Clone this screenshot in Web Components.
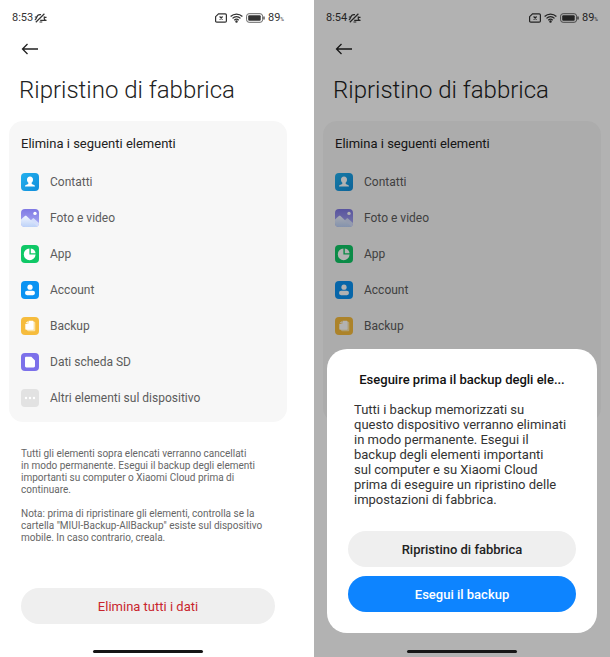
<!DOCTYPE html>
<html lang="it">
<head>
<meta charset="utf-8">
<meta name="viewport" content="width=device-width, initial-scale=1">
<title>Ripristino di fabbrica</title>
<style>
  body {
    margin: 0;
    background: #fff;
    font-family: Roboto, "Liberation Sans", sans-serif;
  }
  main {
    display: grid;
    grid-template-columns: 1fr 1fr;
    gap: 18px;
    min-height: 100vh;
  }
</style>
</head>
<body>
<main>
  <reset-screen time="8:53">
    <item-card heading="Elimina i seguenti elementi">
      <item-row icon="contacts">Contatti</item-row>
      <item-row icon="photos">Foto e video</item-row>
      <item-row icon="app">App</item-row>
      <item-row icon="account">Account</item-row>
      <item-row icon="backup">Backup</item-row>
      <item-row icon="sd">Dati scheda SD</item-row>
      <item-row icon="more">Altri elementi sul dispositivo</item-row>
    </item-card>
    <reset-notes></reset-notes>
    <pill-button slot="action" kind="danger">Elimina tutti i dati</pill-button>
  </reset-screen>
  <reset-screen time="8:54" dimmed>
    <item-card heading="Elimina i seguenti elementi" grow>
      <item-row icon="contacts">Contatti</item-row>
      <item-row icon="photos">Foto e video</item-row>
      <item-row icon="app">App</item-row>
      <item-row icon="account">Account</item-row>
      <item-row icon="backup">Backup</item-row>
    </item-card>
    <backup-dialog slot="dialog" heading="Eseguire prima il backup degli ele...">
      Tutti i backup memorizzati su<br>questo dispositivo verranno eliminati<br>in modo permanente. Esegui il<br>backup degli elementi importanti<br>sul computer e su Xiaomi Cloud<br>prima di eseguire un ripristino delle<br>impostazioni di fabbrica.
      <pill-button slot="actions" kind="strong">Ripristino di fabbrica</pill-button>
      <pill-button slot="actions" kind="primary">Esegui il backup</pill-button>
    </backup-dialog>
  </reset-screen>
</main>

<script>
const ICONS = {
  contacts: /*html*/`
    <defs><linearGradient id="g" x2="1" y2="1"><stop stop-color="#21b0ee"/><stop offset="1" stop-color="#128edb"/></linearGradient></defs>
    <rect width="18" height="18" rx="4" fill="url(#g)"/>
    <path fill="#fff" d="M9 3.600c1.900 0 3 1.300 3 3.100 0 1.300-.6 2.300-1.300 2.900v1.100c.3.700 3.300.8 3.300 2.700H4c0-1.900 3-2 3.300-2.700V9.600C6.600 9 6 8 6 6.700c0-1.800 1.100-3.100 3-3.100z"/>`,
  photos: /*html*/`
    <defs>
      <linearGradient id="g" x2="0" y2="1"><stop stop-color="#7f78e4"/><stop offset="1" stop-color="#aeb0f4"/></linearGradient>
      <linearGradient id="h" x2="0" y2="1"><stop stop-color="#f1f5ff"/><stop offset="1" stop-color="#bdd2f8"/></linearGradient>
      <clipPath id="c"><rect width="18" height="18" rx="4"/></clipPath>
    </defs>
    <g clip-path="url(#c)">
      <rect width="18" height="18" fill="url(#g)"/>
      <circle cx="14" cy="4.400" r="1.700" fill="#fff"/>
      <path fill="#d4defb" d="M8 13l3.500-3.300c.6-.5 1.200-.5 1.800 0L18 14v4H8z"/>
      <path fill="url(#h)" d="M0 10.500l3.600-3.200c.7-.6 1.500-.6 2.200 0L17 18H0z"/>
    </g>`,
  app: /*html*/`
    <rect width="18" height="18" rx="4" fill="#0fc866"/>
    <path fill="#fff" d="M8.400 3.400v6.200h6.200A5.900 5.900 0 1 1 8.400 3.400z"/>
    <path fill="#fff" d="M9.800 3.400a5.500 5.500 0 0 1 4.800 4.800H9.800z"/>`,
  account: /*html*/`
    <rect width="18" height="18" rx="4" fill="#0b93f2"/>
    <circle cx="9" cy="6.200" r="2.600" fill="#fff"/>
    <rect x="4" y="9.800" width="10" height="4.400" rx="2.100" fill="#fff"/>`,
  backup: /*html*/`
    <rect width="18" height="18" rx="4" fill="#f6bc3d"/>
    <path fill="#fbe2a4" d="M6 6l1-1.200h6c.8 0 1.300.5 1.300 1.300v6.800c0 .8-.5 1.300-1.300 1.300H7.200C6.400 14.200 6 13.700 6 13z"/>
    <path fill="#fff" d="M7.600 3.800h3.900c.7 0 1.100.4 1.100 1.100v6.800c0 .7-.4 1.100-1.100 1.100H5.400c-.7 0-1.100-.4-1.100-1.100V7.100h2.200c.7 0 1.100-.4 1.100-1.100z"/>
    <path fill="#fff" d="M4.500 6.200l2.200-2.200v1.600c0 .4-.2.600-.6.600z"/>`,
  sd: /*html*/`
    <rect width="18" height="18" rx="4" fill="#7c70ea"/>
    <path fill="#fff" d="M5.400 3.800h4.900L14 7.500v5.600c0 .9-.5 1.400-1.400 1.400H5.400c-.9 0-1.400-.5-1.400-1.400V5.200c0-.9.500-1.400 1.400-1.400z"/>`,
  more: /*html*/`
    <rect width="18" height="18" rx="4" fill="#e2e2e2"/>
    <g fill="#fff"><circle cx="5" cy="9" r="1.200"/><circle cx="9" cy="9" r="1.200"/><circle cx="13" cy="9" r="1.200"/></g>`
}

class StatusBar extends HTMLElement {

  constructor () {
    super()
    this.shadow = this.attachShadow({ mode: 'open' })
  }

  connectedCallback () {
    this.render()
  }

  render () {
    this.shadow.innerHTML =
    /*html*/`
    <style>
      :host {
        display: flex;
        justify-content: space-between;
        align-items: center;
        padding: 0 12px;
        height: 14px;
        font-size: 11px;
        line-height: 14px;
        color: #333;
      }
      div {
        display: flex;
        align-items: center;
        gap: 3px;
      }
      .clock {
        gap: 1px;
      }
      svg {
        display: block;
        fill: none;
        stroke: currentColor;
      }
      .percent {
        font-size: 5px;
        line-height: 5px;
        align-self: flex-end;
        padding-bottom: 3px;
      }
      .level {
        gap: 0;
      }
    </style>
    <div class="clock">
      <span>${this.getAttribute('time')}</span>
      <svg width="13" height="10" viewBox="0 0 13 10" stroke-width="1.200" aria-hidden="true">
        <path d="M.8 6.800c1.200-.3 1.500-1.200 1.900-2.500C3.300 2.200 4.900 1.300 7 1.700M10.300 3.400c-.4 1.800-.2 2.900.9 3.900H6.200M8.300 9H5.500M1.800 9.200L10.400.8M.8 4h1.500M10.200 4.300h2.300M11 7.300h1.500"/>
      </svg>
    </div>
    <div>
      <svg width="12" height="10" viewBox="0 0 12 10" stroke-width="1.200" aria-hidden="true">
        <path d="M3.500.8h6.700c.8 0 1.200.4 1.200 1.200v6c0 .8-.4 1.200-1.200 1.200H1.800C1 9.200.6 8.800.6 8V3.700zM4.600 3.500l3 3M7.600 3.500l-3 3"/>
      </svg>
      <svg width="13" height="10" viewBox="0 0 13 10" stroke-width="1.300" aria-hidden="true">
        <path d="M.6 3.500c3.300-3.200 8.500-3.200 11.800 0M2.500 5.400c2.300-2.200 5.700-2.200 8 0M4.300 7.200c1.300-1.200 3.100-1.200 4.400 0"/>
        <circle cx="6.500" cy="8.600" r=".6" fill="currentColor"/>
      </svg>
      <svg width="19" height="10" viewBox="0 0 19 10" aria-hidden="true">
        <rect x=".6" y=".7" width="16" height="8.600" rx="2.500" stroke="#666"/>
        <rect x="2.200" y="2.200" width="12.500" height="5.600" rx="1" fill="currentColor" stroke="none"/>
        <path d="M18 3.500v3" stroke-width="1.200"/>
      </svg>
      <div class="level"><span>89</span><span class="percent">%</span></div>
    </div>
    `
  }
}

class ResetScreen extends HTMLElement {

  constructor () {
    super()
    this.shadow = this.attachShadow({ mode: 'open' })
  }

  connectedCallback () {
    this.render()
  }

  render () {
    this.shadow.innerHTML =
    /*html*/`
    <style>
      :host {
        position: relative;
        display: flex;
        flex-direction: column;
        box-sizing: border-box;
        min-width: 0;
        padding: 11px 0 4px;
        background: #fff;
      }
      .back {
        align-self: flex-start;
        margin: 16px 0 0 21px;
        padding: 0;
        border: none;
        background: none;
        color: #222;
        cursor: pointer;
      }
      .back svg {
        display: block;
      }
      h1 {
        margin: 16px 19px 14px;
        font-size: 24px;
        line-height: 34px;
        font-weight: 300;
        color: #222;
      }
      .content {
        display: flex;
        flex-direction: column;
        flex: 1;
        padding: 0 9px;
      }
      :host([dimmed]) .content {
        padding-bottom: 202px;
      }
      .action {
        padding: 0 21px 26px;
      }
      .home {
        width: 110px;
        height: 3px;
        border-radius: 2px;
        background: #161616;
        align-self: center;
        z-index: 2;
      }
      .scrim {
        display: none;
        position: absolute;
        inset: 0;
        background: rgba(0, 0, 0, 0.3);
      }
      :host([dimmed]) .scrim {
        display: block;
      }
      ::slotted([slot="dialog"]) {
        position: absolute;
        left: 13px;
        right: 13px;
        bottom: 24px;
        z-index: 1;
      }
    </style>
    <status-bar time="${this.getAttribute('time')}"></status-bar>
    <button class="back" aria-label="Indietro">
      <svg width="18" height="16" viewBox="0 0 18 16" fill="none" stroke="currentColor" stroke-width="1.300"><path d="M17 8H1.500M6.500 3L1.500 8l5 5"/></svg>
    </button>
    <h1>Ripristino di fabbrica</h1>
    <div class="content"><slot></slot></div>
    <div class="action"><slot name="action"></slot></div>
    <div class="scrim"></div>
    <slot name="dialog"></slot>
    <div class="home"></div>
    `
  }
}

class ItemCard extends HTMLElement {

  constructor () {
    super()
    this.shadow = this.attachShadow({ mode: 'open' })
  }

  connectedCallback () {
    this.render()
  }

  render () {
    this.shadow.innerHTML =
    /*html*/`
    <style>
      :host {
        display: block;
        padding: 12px 12px 6px;
        border-radius: 14px;
        background: #f7f7f7;
      }
      :host([grow]) {
        flex: 1;
      }
      h2 {
        margin: 0 0 9px;
        font-size: 13px;
        line-height: 22px;
        font-weight: 400;
        color: #222;
      }
    </style>
    <h2>${this.getAttribute('heading')}</h2>
    <div role="list"><slot></slot></div>
    `
  }
}

class ItemRow extends HTMLElement {

  constructor () {
    super()
    this.shadow = this.attachShadow({ mode: 'open' })
  }

  connectedCallback () {
    this.setAttribute('role', 'listitem')
    this.render()
  }

  render () {
    this.shadow.innerHTML =
    /*html*/`
    <style>
      :host {
        display: flex;
        align-items: center;
        gap: 11px;
        height: 36px;
        font-size: 12px;
        color: #5c5c5c;
      }
      svg {
        flex: none;
      }
    </style>
    <svg width="18" height="18" viewBox="0 0 18 18" aria-hidden="true">${ICONS[this.getAttribute('icon')]}</svg>
    <span><slot></slot></span>
    `
  }
}

class ResetNotes extends HTMLElement {

  constructor () {
    super()
    this.shadow = this.attachShadow({ mode: 'open' })
  }

  connectedCallback () {
    this.render()
  }

  render () {
    this.shadow.innerHTML =
    /*html*/`
    <style>
      :host {
        display: block;
        padding: 26px 12px 0;
        font-size: 10px;
        line-height: 12px;
        color: #666;
      }
      p {
        margin: 0 0 12px;
      }
    </style>
    <p>Tutti gli elementi sopra elencati verranno cancellati<br>in modo permanente. Esegui il backup degli elementi<br>importanti su computer o Xiaomi Cloud prima di<br>continuare.</p>
    <p>Nota: prima di ripristinare gli elementi, controlla se la<br>cartella "MIUI-Backup-AllBackup" esiste sul dispositivo<br>mobile. In caso contrario, creala.</p>
    `
  }
}

class PillButton extends HTMLElement {

  constructor () {
    super()
    this.shadow = this.attachShadow({ mode: 'open' })
  }

  connectedCallback () {
    this.render()
  }

  render () {
    this.shadow.innerHTML =
    /*html*/`
    <style>
      :host {
        display: block;
      }
      button {
        display: block;
        width: 100%;
        height: 36px;
        padding: 0 12px;
        border: none;
        border-radius: 18px;
        background: #efefef;
        color: #222;
        font: inherit;
        font-size: 13px;
        font-weight: 500;
        cursor: pointer;
      }
      :host([kind="danger"]) button {
        color: #c9252d;
        font-weight: 400;
      }
      :host([kind="primary"]) button {
        background: #0d84ff;
        color: #fff;
      }
    </style>
    <button type="button"><slot></slot></button>
    `
  }
}

class BackupDialog extends HTMLElement {

  constructor () {
    super()
    this.shadow = this.attachShadow({ mode: 'open' })
  }

  connectedCallback () {
    this.setAttribute('role', 'dialog')
    this.render()
  }

  render () {
    this.shadow.innerHTML =
    /*html*/`
    <style>
      :host {
        display: block;
        padding: 21px;
        border-radius: 20px;
        background: #fff;
      }
      h2 {
        margin: 0 0 12px;
        font-size: 13px;
        line-height: 20px;
        font-weight: 500;
        text-align: center;
        white-space: nowrap;
        color: #111;
      }
      p {
        margin: 0 6px 24px;
        font-size: 13px;
        line-height: 15px;
        color: #333;
      }
      .actions {
        display: flex;
        flex-direction: column;
        gap: 9px;
      }
    </style>
    <h2>${this.getAttribute('heading')}</h2>
    <p><slot></slot></p>
    <div class="actions"><slot name="actions"></slot></div>
    `
  }
}

customElements.define('status-bar', StatusBar)
customElements.define('reset-screen', ResetScreen)
customElements.define('item-card', ItemCard)
customElements.define('item-row', ItemRow)
customElements.define('reset-notes', ResetNotes)
customElements.define('pill-button', PillButton)
customElements.define('backup-dialog', BackupDialog)
</script>
</body>
</html>
